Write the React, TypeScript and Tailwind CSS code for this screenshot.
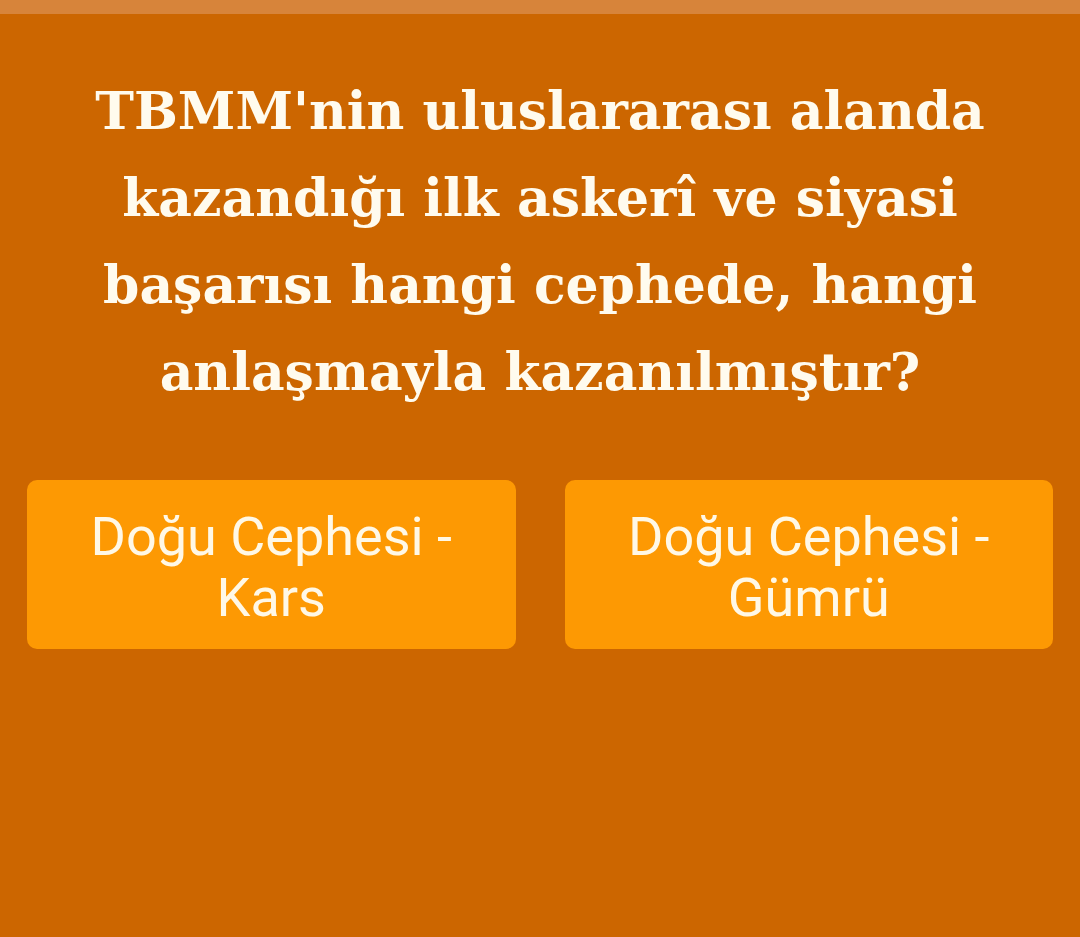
export default function App() {
  const answers = ['Doğu Cephesi - Kars', 'Doğu Cephesi - Gümrü'];

  return (
    <div className="min-h-[937px] w-full bg-[#cc6600] flex flex-col">
      <div className="h-[14px] w-full bg-[#d7843a]" />
      <h1
        className="mt-[53px] px-[60px] text-center text-[52px] leading-[87px] font-bold text-[#fffbee]"
        style={{ fontFamily: '"DejaVu Serif", serif' }}
      >
        TBMM'nin uluslararası alanda kazandığı ilk askerî ve siyasi başarısı hangi cephede, hangi anlaşmayla
        kazanılmıştır?
      </h1>
      <div className="mt-[65px] grid grid-cols-2 gap-[49px] px-[27px]">
        {answers.map((a) => (
          <button
            key={a}
            className="h-[169px] rounded-[10px] bg-[#fd9903] px-10 pt-[4px] text-center text-[54px] leading-[61px] text-[#fff8e6]"
            style={{ fontFamily: 'Roboto, sans-serif' }}
          >
            {a}
          </button>
        ))}
      </div>
    </div>
  );
}
